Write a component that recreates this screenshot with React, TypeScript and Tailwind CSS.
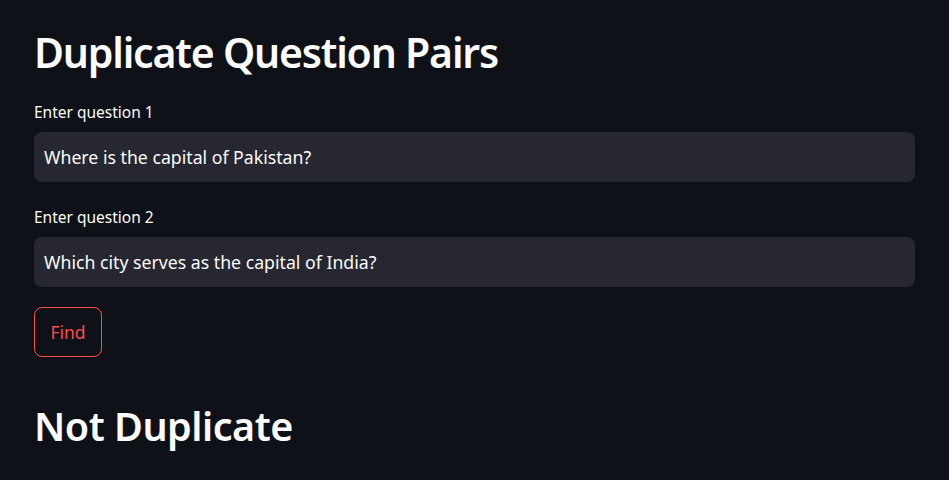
import { useState } from "react";

const font = { fontFamily: '"Noto Sans", "Open Sans", sans-serif' };

function Field({ label, value }: { label: string; value: string }) {
  const [text, setText] = useState(value);
  return (
    <div className="flex flex-col">
      <label className="text-[15.5px] leading-[20px] text-[#fafafa] mb-[10px]">{label}</label>
      <input
        className="h-[50px] w-full rounded-[8px] bg-[#262730] px-[10px] text-[17.7px] text-[#fafafa] outline-none"
        value={text}
        onChange={(e) => setText(e.target.value)}
        style={font}
      />
    </div>
  );
}

export default function App() {
  return (
    <div className="min-h-[480px] w-full bg-[#0e1117] text-[#fafafa]" style={font}>
      <div className="px-[34px] pt-[25px]">
        <h1 className="text-[41px] font-semibold leading-[54px] tracking-[-1.2px]">Duplicate Question Pairs</h1>

        <div className="mt-[23px]">
          <Field label="Enter question 1" value="Where is the capital of Pakistan?" />
        </div>
        <div className="mt-[25px]">
          <Field label="Enter question 2" value="Which city serves as the capital of India?" />
        </div>

        <button className="mt-[20px] h-[50px] w-[68px] rounded-[8px] border border-[#ff4b4b] text-[17.5px] text-[#ff4b4b]">
          Find
        </button>

        <h2 className="mt-[44px] text-[39.5px] font-semibold leading-[50px] tracking-[-0.5px]">Not Duplicate</h2>
      </div>
    </div>
  );
}
